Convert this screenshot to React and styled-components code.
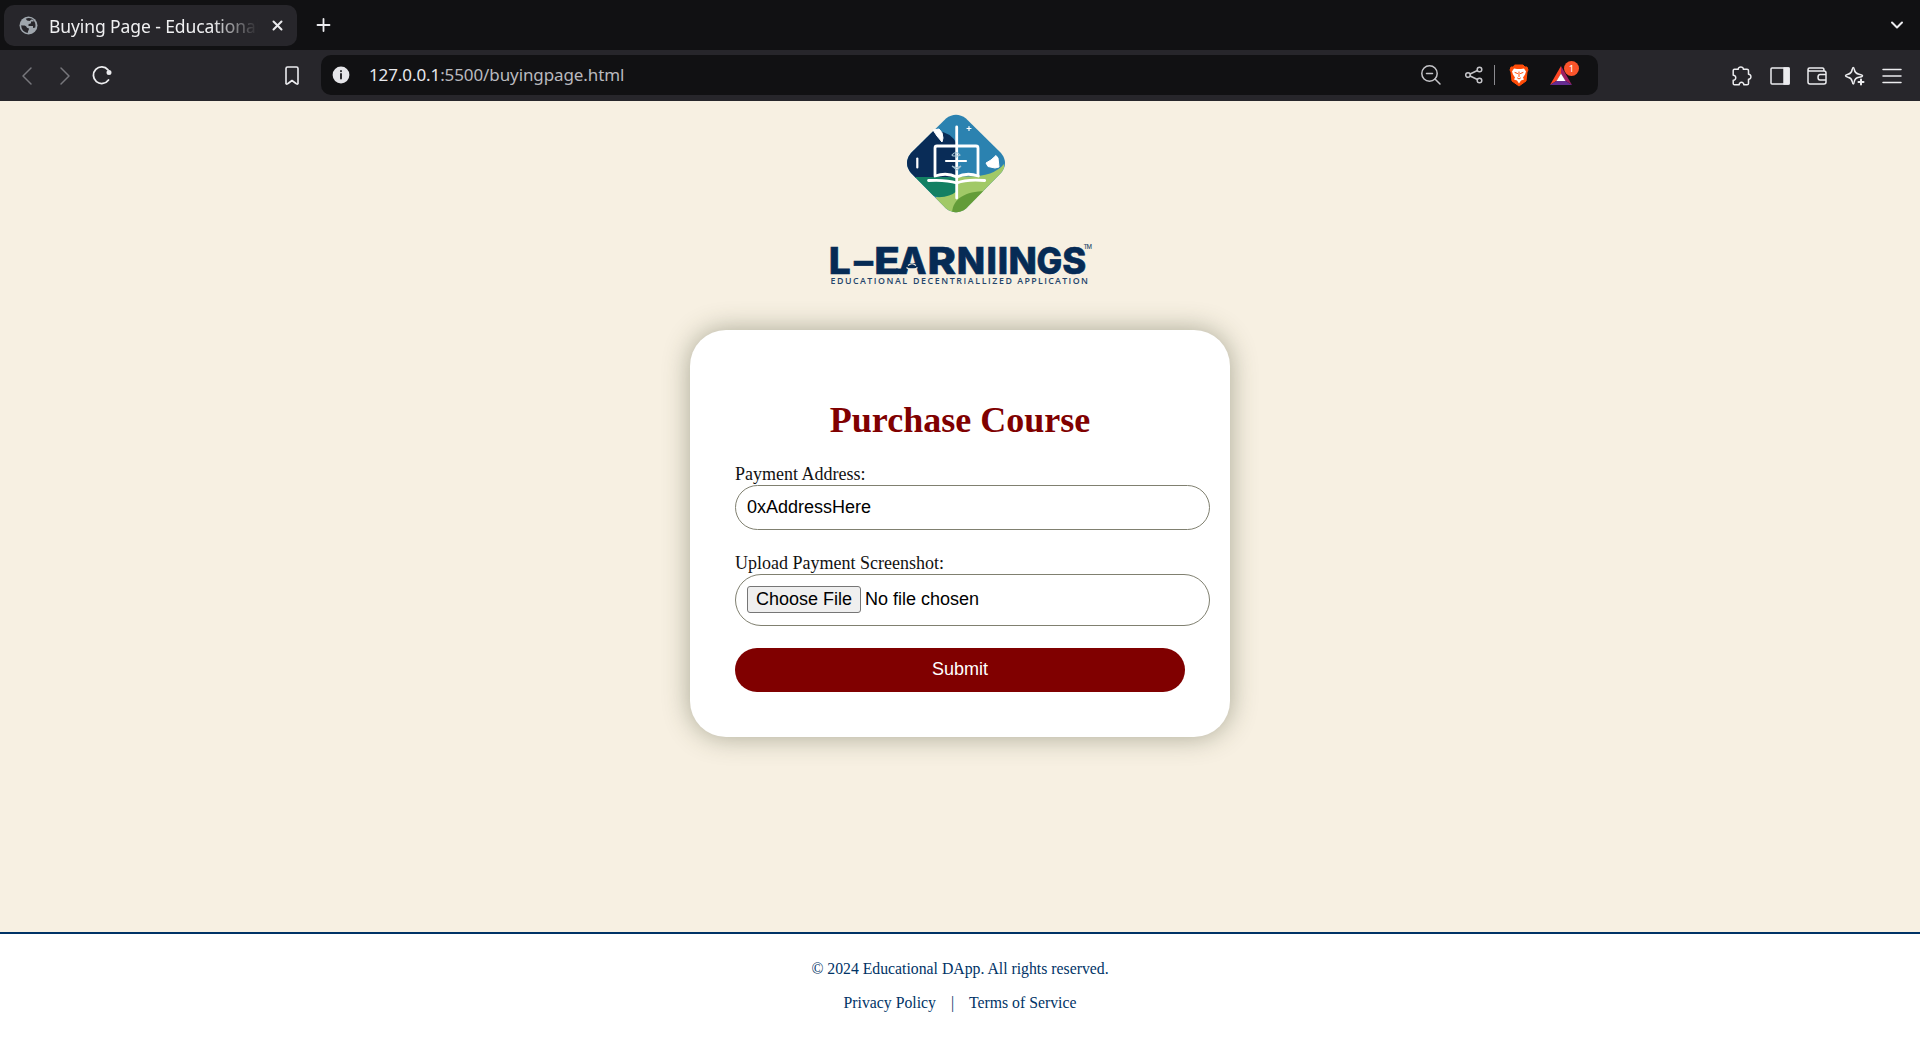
import React from "react";
import styled, { createGlobalStyle } from "styled-components";

const Global = createGlobalStyle`
  * { box-sizing: border-box; }
  body { margin: 0; background: #f7f0e2; overflow: hidden; }
`;

const Window = styled.div`
  width: 1920px;
  height: 1040px;
  display: flex;
  flex-direction: column;
  font-family: "Liberation Serif", "Times New Roman", serif;
`;

const TabStrip = styled.div`
  height: 50px;
  flex: none;
  display: flex;
  align-items: center;
  background: #111113;
  padding: 0 15px 0 4px;
  font-family: "Noto Sans", "Open Sans", sans-serif;
`;

const Tab = styled.div`
  width: 293px;
  height: 41px;
  border-radius: 10px;
  background: #27262b;
  display: flex;
  align-items: center;
  padding: 0 11px 0 15px;
`;

const TabTitle = styled.div`
  width: 209px;
  margin: 1px 15px 0 11px;
  overflow: hidden;
  white-space: nowrap;
  font-size: 17.5px;
  line-height: 26px;
  letter-spacing: -0.1px;
  color: #f0f0f2;
  mask-image: linear-gradient(to right, #000 78%, transparent 100%);
`;

const NewTab = styled.div`
  margin-left: 18px;
  display: flex;
  flex: 1;
`;

const Toolbar = styled.div`
  height: 51px;
  flex: none;
  display: flex;
  align-items: center;
  background: #27262b;
  font-family: "Noto Sans", "Open Sans", sans-serif;
`;

const NavGroup = styled.div`
  width: 321px;
  display: flex;
  align-items: center;
  padding-left: 18px;
`;

const Icon = styled.svg`
  display: block;
  flex: none;
  width: ${(p) => p.$w || 20}px;
  height: ${(p) => p.$h || p.$w || 20}px;
  margin-left: ${(p) => p.$ml || 0}px;
  fill: none;
  stroke: ${(p) => p.$color || "#ececef"};
  stroke-width: ${(p) => p.$sw || 1.5};
  stroke-linecap: round;
  stroke-linejoin: round;
  overflow: visible;
`;

const AddressBar = styled.div`
  width: 1277px;
  height: 40px;
  margin-bottom: 1px;
  border-radius: 10px;
  background: #111113;
  display: flex;
  align-items: center;
  padding: 0 19px 0 11px;
`;

const Address = styled.div`
  flex: 1;
  margin-left: 19px;
  font-size: 17px;
  line-height: 24px;
  letter-spacing: -0.1px;
  white-space: nowrap;
  color: #b9b9be;
  b { font-weight: 400; color: #e8e8ec; }
`;

const Divider = styled.span`
  width: 1px;
  height: 20px;
  margin-left: 11px;
  background: #8b8b90;
`;

const Actions = styled.div`
  display: flex;
  align-items: center;
  gap: 17.5px;
  margin-left: 134px;
`;

const Page = styled.main`
  flex: 1;
  display: flex;
  flex-direction: column;
  align-items: center;
  background: #f7f0e2;
`;

const Brand = styled.svg`
  display: block;
  width: 280px;
  height: 229px;
  flex: none;
`;

const Card = styled.section`
  width: 540px;
  height: 407px;
  border-radius: 36px;
  background: #fff;
  padding: 70px 45px 45px;
  box-shadow: 0 0 27px rgba(60, 66, 40, 0.42);
`;

const Title = styled.h1`
  margin: 0 0 24px;
  text-align: center;
  font-size: 36px;
  line-height: 40px;
  color: #800000;
`;

const Label = styled.label`
  display: block;
  font-size: 18px;
  line-height: 21px;
  color: #111;
`;

const Field = styled.input`
  display: block;
  width: 475px;
  height: ${(p) => p.$h}px;
  margin: 0 0 ${(p) => p.$gap}px;
  padding: 11px;
  border: 1px solid #808070;
  border-radius: 27px;
  outline: none;
  background: #fff;
  font: 18px "Liberation Sans", Arial, sans-serif;
  color: #000;

  &::file-selector-button {
    height: 27px;
    margin: 0 4px 0 0;
    padding: 0 8px;
    border: 1px solid #767676;
    border-radius: 3px;
    background: #efefef;
    color: #000;
    font: 18px "Liberation Sans", Arial, sans-serif;
  }
`;

const Submit = styled.button`
  display: block;
  width: 450px;
  height: 44px;
  padding: 0 0 2px;
  border: 0;
  border-radius: 27px;
  background: #800000;
  color: #fff;
  font: 18px "Liberation Sans", Arial, sans-serif;
`;

const Footer = styled.footer`
  height: 108px;
  flex: none;
  border-top: 2px solid #003366;
  background: #fff;
  display: flex;
  flex-direction: column;
  align-items: center;
  padding-top: 25px;
  gap: 14px;
  font-size: 15.75px;
  line-height: 20px;
  color: #003366;
`;

const Links = styled.nav`
  display: flex;
  gap: 15px;
`;

const wordmark = [
  ["L", 828.8, 22],
  ["–", 854, 19],
  ["E", 874.2, 25.5],
  ["A", 898.4, 28],
  ["R", 927.5, 28.5],
  ["N", 956.8, 28.4],
  ["I", 986.5, 10.4],
  ["I", 997.8, 10.4],
  ["N", 1008.5, 28.4],
  ["G", 1036.5, 25.7],
  ["S", 1062.3, 24],
];

const tagline = [
  ["EDUCATIONAL", 830.5, 76.5],
  ["DECENTRIALLIZED", 913, 99],
  ["APPLICATION", 1017.3, 70.5],
];

function Logo() {
  return (
    <Brand viewBox="820 101 280 229" aria-label="L-Earniings">
      <defs>
        <clipPath id="diamond">
          <path d="M946 118.500Q956 111 966 118.500L1001 153Q1009 163 1001 173L966 208.500Q956 216 946 208.500L911 173Q903 163 911 153Z" />
        </clipPath>
      </defs>
      <g clipPath="url(#diamond)">
        <path d="M900 105h112v116H900z" fill="#2b82b0" />
        <path d="M900 144Q918 132 936 130.500Q951 132 957 144V178H900z" fill="#092c57" />
        <path d="M900 177H957V199Q940 199 920 192L900 182z" fill="#138063" />
        <path d="M957 176Q992 179 1004 164V220H920L936 197Q949 198 957 191z" fill="#a1c967" />
        <path d="M952 213C953 196 970 189 997 192L970 218z" fill="#639c38" />
      </g>
      <g fill="none" stroke="#fff" strokeLinecap="round" strokeWidth="2.800">
        <path d="M956.700 127V198M935 175V148q0-2 2-2h39q2 0 2 2v27" />
        <path d="M935 176q12-4 21.700 1q10-5 21.700-1" />
        <path d="M928.500 180.500q18-1 28.200 2.500q10-4 28-2.500" />
        <path d="M946 161h20" strokeWidth="2.200" />
        <path d="M917.300 158.500v9" strokeWidth="2.200" />
        <path d="M967 128.500h4M969 126.500v4" strokeWidth="1.200" />
      </g>
      <path d="M933 130L939 129Q943 132 943 138L942 142L937 136zM986 163L991 160L996 155.500L998 158L999 167L995 168L988 166.500z" fill="#fff" stroke="#fff" strokeWidth="1" strokeLinejoin="round" />
      <path d="M952 155q4-5 8 0l-2 1h-5zm4-3v6m-4 8q4 3 9 0l-4 4z" fill="none" stroke="#a4c2d1" strokeWidth="1.200" />
      <g fill="#062b55" stroke="#062b55" strokeWidth="0.600" fontFamily="Inter, sans-serif" fontWeight="800" fontSize="36.500">
        {wordmark.map(([letter, x, length], i) => (
          <text key={i} x={x} y="274" textLength={length} lengthAdjust="spacingAndGlyphs">{letter}</text>
        ))}
      </g>
      <path d="M896 271.300h6" stroke="#062b55" strokeWidth="5.400" />
      <path d="M908 265.500q4-3.500 8 0M906.500 267.500q5.500 5 11 0" fill="none" stroke="#f7f0e2" strokeWidth="1.200" />
      <text x="1083.500" y="249" fontFamily="Inter, sans-serif" fontSize="6" fontWeight="500" fill="#33506f" textLength="8.500">TM</text>
      <g fontFamily="Open Sans, sans-serif" fontSize="8.800" fontWeight="600" fill="#24456b">
        {tagline.map(([word, x, length]) => (
          <text key={word} x={x} y="284" textLength={length}>{word}</text>
        ))}
      </g>
    </Brand>
  );
}

export default function App() {
  return (
    <Window>
      <Global />
      <TabStrip>
        <Tab>
          <Icon $w={19} viewBox="0 0 19 19">
            <circle cx="9.500" cy="9.500" r="9" fill="#9fa6ad" stroke="none" />
            <path d="M2.300 9.300C4 9.700 6 8.800 7 10.200C8 11.500 8 12.300 9.800 12.200V14C8.500 15 9.500 16.200 8.500 16.900C5 16.300 2 13.500 2.300 9.300ZM6.800 2.700C10 1.300 13 2.200 14.800 4.200L14.500 5.500H12V7.300L9.500 8.200V10H14V12L16.300 11.500C17 8 16 5 13 3.200L10.500 5L8 4.500z" fill="#27262b" stroke="none" />
          </Icon>
          <TabTitle>Buying Page - Educational DApp</TabTitle>
          <Icon $w={9} $sw={2} viewBox="0 0 9 9"><path d="M.5.500l8 8M8.500.500l-8 8" /></Icon>
        </Tab>
        <NewTab>
          <Icon $w={16} $sw={1.8} viewBox="0 0 16 16"><path d="M8.500 2v12M2.500 8h12" /></Icon>
        </NewTab>
        <Icon $w={16} $sw={2} viewBox="0 0 16 16"><path d="M3 5.500l5 5l5-5" /></Icon>
      </TabStrip>

      <Toolbar>
        <NavGroup>
          <Icon $w={18} $color="#77777c" viewBox="0 0 18 18"><path d="M13 1L5 9l8 8" /></Icon>
          <Icon $w={18} $ml={20} $color="#77777c" viewBox="0 0 18 18"><path d="M5 1l8 8l-8 8" /></Icon>
          <Icon $w={20} $ml={18} $sw={1.8} viewBox="0 0 20 20">
            <path d="M16.500 14A8.300 8.300 0 1 1 16 3.800" />
            <circle cx="17" cy="6.500" r="1.600" fill="#ececef" />
          </Icon>
          <Icon $w={14} $h={19} $ml={173} $sw={1.6} viewBox="0 0 14 19">
            <path d="M1 2.500Q1 1 2.500 1h9Q13 1 13 2.500v15.200Q12 18.500 11 17.500L7 14.500L3 17.500Q2 18.500 1 17.700z" />
          </Icon>
        </NavGroup>
        <AddressBar>
          <Icon $w={18} viewBox="0 0 18 18">
            <circle cx="9" cy="9" r="8.400" fill="#e5e5e9" stroke="none" />
            <path d="M9 8v4.500M9 5v.2" stroke="#222226" strokeWidth="1.900" />
          </Icon>
          <Address><b>127.0.0.1</b>:5500/buyingpage.html</Address>
          <Icon $w={20} $color="#c4c4c8" viewBox="0 0 20 20">
            <circle cx="8.500" cy="8.500" r="7.700" /><path d="M14 14l5 5M5.500 8.500h6" />
          </Icon>
          <Icon $w={18} $ml={24} $color="#c4c4c8" viewBox="0 0 18 18">
            <circle cx="3" cy="9" r="2.300" /><circle cx="14.500" cy="3.500" r="2.300" /><circle cx="14.500" cy="14.500" r="2.300" />
            <path d="M5.100 8L12.400 4.500M5.100 10L12.400 13.500" />
          </Icon>
          <Divider />
          <Icon $w={20} $h={23} $ml={14} viewBox="0 0 20 23">
            <path d="M6 1h8l2 2h2l1 3l-1 2l-1 9l-7 5l-7-5l-1-9l-1-2l1-3h2z" fill="#ff4c08" stroke="#ff4c08" strokeWidth="1" />
            <path d="M5 4.500l3 .5h4l3-.5l2 3l-1 3l-2 3l1 2l-3 1l-2 3l-2-3l-3-1l1-2l-2-3l-1-3z" fill="#fff" stroke="none" />
            <path d="M6 8.500l2.500 1M14 8.500l-2.500 1M10 8v4.500M8.500 14l1.500 1l1.500-1" stroke="#ff4c08" strokeWidth="1" />
          </Icon>
          <Icon $w={30} $h={26} $ml={20} viewBox="0 0 30 26">
            <path d="M12 4v7.500L8 18.500L1 23z" fill="#ff4724" stroke="none" />
            <path d="M12 4l11 19l-7-4.500l-4-7z" fill="#9e1f63" stroke="none" />
            <path d="M1 23l7-4.500h8l7 4.500z" fill="#662d91" stroke="none" />
            <path d="M12 11.500l4.500 7.500h-9z" fill="#fff" stroke="none" />
            <circle cx="22.500" cy="6.500" r="7.500" fill="#fb542b" stroke="none" />
            <text x="19.800" y="9.700" fontFamily="Noto Sans, sans-serif" fontSize="9.500" fill="#fff" stroke="none">1</text>
          </Icon>
        </AddressBar>
        <Actions>
          <Icon viewBox="0 0 20 20">
            <path d="M1.200 4.500Q1.200 3.200 2.500 3.200H6.300C6 .2 11.600 .2 11.300 3.200H15Q16.500 3.200 16.500 4.700V8.200C19.700 8 19.700 13.500 16.500 13.300V17.400Q16.500 18.800 15 18.800H11.800C12 15.500 7 15.500 7.200 18.800H2.500Q1.200 18.800 1.200 17.400V14.200C4.600 14.300 4.600 9 1.200 9.200z" />
          </Icon>
          <Icon viewBox="0 0 20 20">
            <rect x="1" y="2" width="18" height="16" rx="1" /><path d="M14 2h5v16h-5z" fill="#ececef" />
          </Icon>
          <Icon viewBox="0 0 20 20">
            <path d="M1 3.500V16q0 2 2 2h14q2 0 2-2V7q0-2-2-2H2.500Q1 5 1 3.500T2.500 2h13Q17 2 17 4.500M19 8.500h-6q-2 0-2 2.800t2 2.800h6" />
          </Icon>
          <Icon viewBox="0 0 20 20">
            <path d="M8.300 1.500Q9 1.500 9.300 3.500Q10 7.500 14 8.200Q17.500 8.800 17.500 9.800T14 11.300Q10 12 9.300 15.500Q9 18 8.300 18T7.200 15.500Q6.500 12 3 11.300Q.5 10.700.500 9.800T3 8.200Q6.500 7.500 7.200 3.500Q7.500 1.500 8.300 1.500z" />
            <path d="M16 13.500v5M13.500 16h5" strokeWidth="2" />
          </Icon>
          <Icon viewBox="0 0 20 20"><path d="M1 3.500h18M1 10h18M1 16.500h18" /></Icon>
        </Actions>
      </Toolbar>

      <Page>
        <Logo />
        <Card>
          <Title>Purchase Course</Title>
          <Label htmlFor="address">Payment Address:</Label>
          <Field id="address" type="text" defaultValue="0xAddressHere" $h={45} $gap={23} />
          <Label htmlFor="proof">Upload Payment Screenshot:</Label>
          <Field id="proof" type="file" $h={52} $gap={22} />
          <Submit type="button">Submit</Submit>
        </Card>
      </Page>

      <Footer>
        <div>© 2024 Educational DApp. All rights reserved.</div>
        <Links>
          <span>Privacy Policy</span><span>|</span><span>Terms of Service</span>
        </Links>
      </Footer>
    </Window>
  );
}
